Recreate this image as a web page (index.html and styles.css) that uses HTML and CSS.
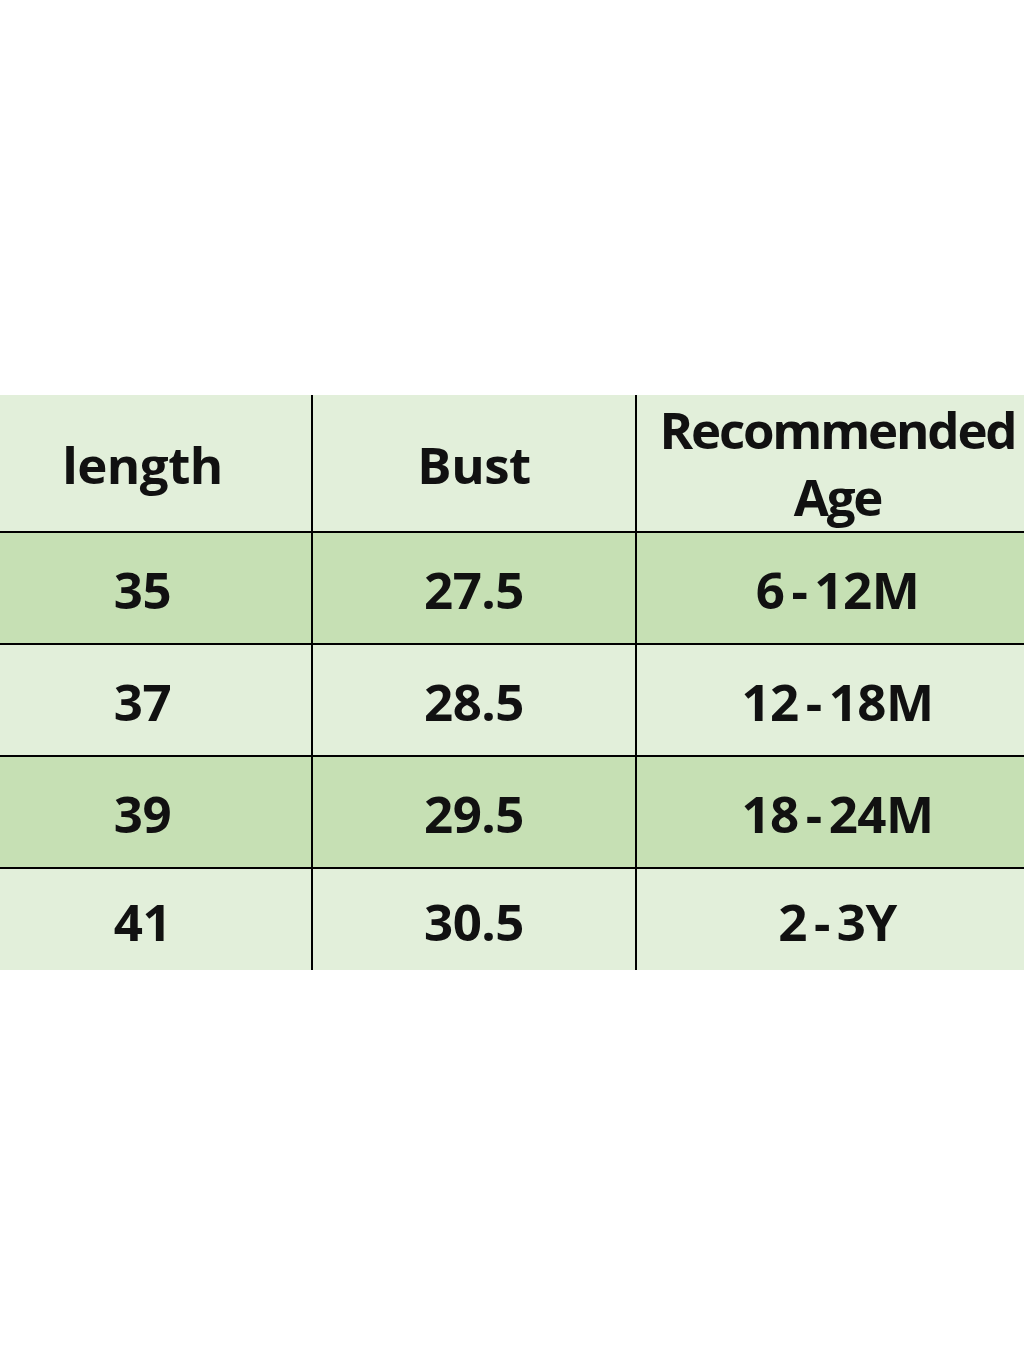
FILE: index.html
```html
<!DOCTYPE html>
<html>
<head>
<meta charset="utf-8">
<link rel="stylesheet" href="styles.css">
</head>
<body>
<div class="page">
  <div class="table">
    <div class="row head light">
      <div class="cell c1">length</div>
      <div class="cell c2">Bust</div>
      <div class="cell c3">Recommended<br>Age</div>
    </div>
    <div class="row dark">
      <div class="cell c1">35</div>
      <div class="cell c2">27.5</div>
      <div class="cell c3">6<span class="dash">-</span>12M</div>
    </div>
    <div class="row light">
      <div class="cell c1">37</div>
      <div class="cell c2">28.5</div>
      <div class="cell c3">12<span class="dash">-</span>18M</div>
    </div>
    <div class="row dark">
      <div class="cell c1">39</div>
      <div class="cell c2">29.5</div>
      <div class="cell c3">18<span class="dash">-</span>24M</div>
    </div>
    <div class="row light last">
      <div class="cell c1">41</div>
      <div class="cell c2">30.5</div>
      <div class="cell c3">2<span class="dash">-</span>3Y</div>
    </div>
  </div>
</div>
</body>
</html>
```
FILE: styles.css
```css
html, body {
  margin: 0;
  padding: 0;
  background: #ffffff;
}
.page {
  width: 1024px;
  height: 1365px;
  padding-top: 395px;
  box-sizing: border-box;
  overflow: hidden;
}
.table {
  display: flex;
  flex-direction: column;
  font-family: "Open Sans", "Liberation Sans", sans-serif;
  font-weight: 700;
  font-size: 51px;
  color: #111111;
}
.row {
  display: grid;
  grid-template-columns: 313px 324px 1fr;
  height: 112px;
  box-sizing: border-box;
  border-bottom: 2px solid #000;
}
.row.head {
  height: 138px;
  line-height: 67px;
}
.row.last {
  height: 101px;
  border-bottom: none;
}
.light { background: #e2efda; }
.dark { background: #c6e0b4; }
.cell {
  display: flex;
  align-items: center;
  justify-content: center;
  text-align: center;
  box-sizing: border-box;
  letter-spacing: -0.5px;
}
.c1 {
  border-right: 2px solid #000;
  padding-right: 26px;
  padding-top: 2px;
}
.c2 {
  border-right: 2px solid #000;
  padding-top: 2px;
}
.c3 {
  padding-left: 14px;
  padding-top: 2px;
  white-space: nowrap;
}
.head .c3 {
  padding-top: 0;
  letter-spacing: -2.2px;
}
.dash {
  margin: 0 7px;
}
```
